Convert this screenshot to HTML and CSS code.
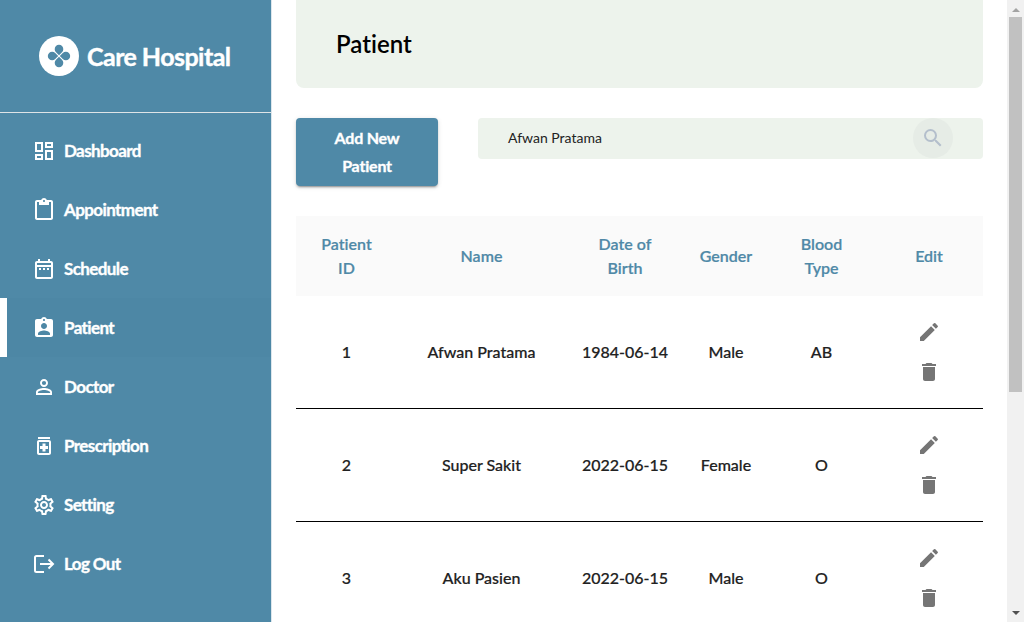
FILE: index.html
```html
<!DOCTYPE html>
<html lang="en">
<head>
<meta charset="utf-8">
<title>Care Hospital</title>
<link rel="stylesheet" href="styles.css">
</head>
<body>
<svg class="sprite" aria-hidden="true">
  <symbol id="pencil" viewBox="0 0 24 24"><path d="M3 17.25V21h3.75L17.81 9.94l-3.75-3.75L3 17.25zM20.71 7.04c.39-.39.39-1.02 0-1.41l-2.34-2.34a.9959.9959 0 0 0-1.41 0l-1.83 1.83 3.75 3.75 1.83-1.83z"/></symbol>
  <symbol id="trash" viewBox="0 0 24 24"><path d="M6 19c0 1.100.9 2 2 2h8c1.100 0 2-.9 2-2V7H6v12zM19 4h-3.500l-1-1h-5l-1 1H5v2h14V4z"/></symbol>
</svg>
<div class="app">
  <aside class="sidebar">
    <div class="brand">
      <svg class="logo" viewBox="0 0 40 40">
        <circle cx="20" cy="20" r="20" fill="#fff"/>
        <g fill="#4f89a7">
          <path d="M20 19.200 17 16.200A4.300 4.300 0 1 1 23 16.200z"/>
          <path d="M20 19.200 17 16.200A4.300 4.300 0 1 1 23 16.200z" transform="rotate(90 20 20)"/>
          <path d="M20 19.200 17 16.200A4.300 4.300 0 1 1 23 16.200z" transform="rotate(180 20 20)"/>
          <path d="M20 19.200 17 16.200A4.300 4.300 0 1 1 23 16.200z" transform="rotate(270 20 20)"/>
        </g>
      </svg>
      <span class="brand-name">Care Hospital</span>
    </div>
    <nav class="menu">
      <a class="menu-item"><svg class="icon" viewBox="0 0 24 24"><path d="M19 5v2h-4V5h4M9 5v6H5V5h4m10 8v6h-4v-6h4M9 17v2H5v-2h4M21 3h-8v6h8V3zM11 3H3v10h8V3zm10 8h-8v10h8V11zm-10 4H3v6h8v-6z"/></svg><span>Dashboard</span></a>
      <a class="menu-item"><svg class="icon" viewBox="0 0 24 24"><path d="M19 2h-4.180C14.400.84 13.300 0 12 0S9.600.84 9.180 2H5c-1.100 0-2 .9-2 2v16c0 1.100.9 2 2 2h14c1.100 0 2-.9 2-2V4c0-1.100-.9-2-2-2zm-7 0c.55 0 1 .45 1 1s-.45 1-1 1-1-.45-1-1 .45-1 1-1zm7 18H5V4h2v3h10V4h2v16z"/></svg><span>Appointment</span></a>
      <a class="menu-item"><svg class="icon" viewBox="0 0 24 24"><path d="M19 4h-1V2h-2v2H8V2H6v2H5c-1.110 0-1.990.9-1.990 2L3 20c0 1.100.89 2 2 2h14c1.100 0 2-.9 2-2V6c0-1.100-.9-2-2-2zm0 16H5V10h14v10zm0-12H5V6h14v2zM7 11h2v2H7zm4 0h2v2h-2zm4 0h2v2h-2z"/></svg><span>Schedule</span></a>
      <a class="menu-item active"><svg class="icon" viewBox="0 0 24 24"><path d="M19 3h-4.180C14.400 1.840 13.300 1 12 1s-2.400.84-2.820 2H5c-1.100 0-2 .9-2 2v14c0 1.100.9 2 2 2h14c1.100 0 2-.9 2-2V5c0-1.100-.9-2-2-2zm-7 0c.55 0 1 .45 1 1s-.45 1-1 1-1-.45-1-1 .45-1 1-1zm0 4c1.660 0 3 1.340 3 3s-1.340 3-3 3-3-1.340-3-3 1.340-3 3-3zm6 12H6v-1.400c0-2 4-3.100 6-3.100s6 1.100 6 3.100V19z"/></svg><span>Patient</span></a>
      <a class="menu-item"><svg class="icon" viewBox="0 0 24 24"><path d="M12 5.900a2.100 2.100 0 1 1 0 4.200 2.100 2.100 0 0 1 0-4.200m0 9c2.970 0 6.100 1.460 6.100 2.100v1.100H5.900V17c0-.64 3.130-2.100 6.100-2.100M12 4C9.790 4 8 5.790 8 8s1.790 4 4 4 4-1.790 4-4-1.790-4-4-4zm0 9c-2.670 0-8 1.340-8 4v3h16v-3c0-2.660-5.330-4-8-4z"/></svg><span>Doctor</span></a>
      <a class="menu-item"><svg class="icon" viewBox="0 0 24 24"><path d="M6 3h12v2H6zM17 6H7c-1.100 0-2 .9-2 2v11c0 1.100.9 2 2 2h10c1.100 0 2-.9 2-2V8c0-1.100-.9-2-2-2zm0 13H7V8h10v11zm-6.500-1.500h3V15H16v-3h-2.500V9.500h-3V12H8v3h2.500z"/></svg><span>Prescription</span></a>
      <a class="menu-item"><svg class="icon" viewBox="0 0 24 24"><path d="M19.430 12.980c.04-.32.070-.64.070-.98s-.03-.66-.07-.98l2.110-1.650c.19-.15.240-.42.120-.64l-2-3.460c-.09-.16-.26-.25-.44-.25-.06 0-.12.010-.17.030l-2.490 1c-.52-.4-1.080-.73-1.690-.98l-.38-2.650C14.460 2.180 14.250 2 14 2h-4c-.25 0-.46.180-.49.420l-.38 2.650c-.61.250-1.170.590-1.690.98l-2.490-1c-.06-.02-.12-.03-.18-.03-.17 0-.34.090-.43.250l-2 3.460c-.13.220-.07.490.12.640l2.110 1.650c-.04.320-.07.650-.07.980s.03.660.070.980l-2.110 1.650c-.19.150-.24.420-.12.640l2 3.460c.09.160.26.250.44.250.06 0 .12-.01.17-.03l2.490-1c.52.400 1.080.730 1.690.980l.38 2.650c.03.240.24.420.49.420h4c.25 0 .46-.18.490-.42l.38-2.650c.61-.25 1.170-.59 1.690-.98l2.490 1c.06.020.12.030.18.030.17 0 .34-.09.430-.25l2-3.460c.12-.22.070-.49-.12-.64l-2.110-1.650zm-1.980-1.710c.04.310.050.520.050.730s-.02.430-.05.730l-.14 1.130.89.700 1.080.84-.7 1.210-1.270-.51-1.040-.42-.9.680c-.43.320-.84.560-1.250.730l-1.060.43-.16 1.130-.2 1.350h-1.400l-.19-1.350-.16-1.130-1.060-.43c-.43-.18-.83-.41-1.230-.71l-.91-.7-1.060.43-1.270.51-.7-1.210 1.080-.84.890-.7-.14-1.130c-.03-.31-.05-.54-.05-.74s.02-.43.050-.73l.14-1.130-.89-.7-1.080-.84.700-1.210 1.270.51 1.040.42.900-.68c.43-.32.840-.56 1.250-.73l1.060-.43.160-1.130.2-1.350h1.390l.19 1.350.160 1.130 1.060.43c.43.180.83.410 1.230.71l.91.700 1.060-.43 1.270-.51.700 1.210-1.070.85-.89.700.14 1.130zM12 8c-2.210 0-4 1.790-4 4s1.790 4 4 4 4-1.790 4-4-1.790-4-4-4zm0 6c-1.100 0-2-.9-2-2s.9-2 2-2 2 .9 2 2-.9 2-2 2z"/></svg><span>Setting</span></a>
      <a class="menu-item"><svg class="icon line" viewBox="0 0 24 24"><path d="M12 4H4.500Q3 4 3 5.500v13Q3 20 4.500 20H12M8 12h13M16.500 7.500 21 12l-4.500 4.500"/></svg><span>Log Out</span></a>
    </nav>
  </aside>
  <main class="content">
    <header class="page-head"><h1>Patient</h1></header>
    <div class="toolbar">
      <button class="add">Add New Patient</button>
      <div class="search">
        <span class="query">Afwan Pratama</span>
        <span class="search-btn"><svg class="icon-search" viewBox="0 0 24 24"><path d="M15.500 14h-.79l-.28-.27A6.471 6.471 0 0 0 16 9.500 6.500 6.500 0 1 0 9.500 16c1.610 0 3.090-.59 4.230-1.570l.27.28v.79l5 4.990L20.490 19l-4.990-5zm-6 0C7.010 14 5 11.990 5 9.500S7.010 5 9.500 5 14 7.010 14 9.500 11.990 14 9.500 14z"/></svg></span>
      </div>
    </div>
    <table class="patients">
      <colgroup><col class="c-id"><col class="c-name"><col class="c-date"><col class="c-gender"><col class="c-blood"><col class="c-edit"></colgroup>
      <thead><tr><th>Patient<br>ID</th><th>Name</th><th>Date of<br>Birth</th><th>Gender</th><th>Blood<br>Type</th><th>Edit</th></tr></thead>
      <tbody>
        <tr><td>1</td><td>Afwan Pratama</td><td>1984-06-14</td><td>Male</td><td>AB</td><td><div class="actions"><svg><use href="#pencil"/></svg><svg><use href="#trash"/></svg></div></td></tr>
        <tr><td>2</td><td>Super Sakit</td><td>2022-06-15</td><td>Female</td><td>O</td><td><div class="actions"><svg><use href="#pencil"/></svg><svg><use href="#trash"/></svg></div></td></tr>
        <tr><td>3</td><td>Aku Pasien</td><td>2022-06-15</td><td>Male</td><td>O</td><td><div class="actions"><svg><use href="#pencil"/></svg><svg><use href="#trash"/></svg></div></td></tr>
      </tbody>
    </table>
  </main>
  <div class="scrollbar">
    <span class="arrow up"></span>
    <span class="thumb"></span>
    <span class="arrow down"></span>
  </div>
</div>
</body>
</html>
```
FILE: styles.css
```css
* { box-sizing: border-box; }
body { margin: 0; font-family: Lato, "Liberation Sans", sans-serif; font-variant-ligatures: none; color: #212121; background: #fff; overflow: hidden; }
.sprite { display: none; }
.app { display: flex; height: 622px; overflow: hidden; }

.sidebar { width: 272px; flex: none; background: #4f89a7; border-right: 1px solid #dce6ec; color: #fff; }
.brand { height: 113px; padding-left: 39px; border-bottom: 1px solid #dfe4e7; display: flex; align-items: center; gap: 8px; }
.logo { width: 40px; height: 40px; flex: none; }
.brand-name { font-size: 25px; font-weight: 700; letter-spacing: -0.55px; white-space: nowrap; -webkit-text-stroke: 0.4px #fff; }
.menu { padding-top: 8px; }
.menu-item { height: 59px; padding-left: 32px; display: flex; align-items: center; gap: 8px; font-size: 17px; line-height: 24px; font-weight: 700; letter-spacing: -0.6px; -webkit-text-stroke: 0.35px #fff; }
.menu-item span { padding-top: 1px; }
.menu-item.active { background: #4d87a5; border-left: 7px solid #fff; padding-left: 25px; }
.icon { width: 24px; height: 24px; fill: #fff; flex: none; }
.icon.line { fill: none; stroke: #fff; stroke-width: 2; }

.content { width: 735px; flex: none; padding: 0 24px; }
.page-head { height: 88px; padding-left: 40px; background: #edf3ec; border-radius: 0 0 8px 8px; display: flex; align-items: center; }
.page-head h1 { margin: 0; font-size: 24px; line-height: 32px; font-weight: 600; color: #000; }
.toolbar { margin-top: 30px; display: flex; align-items: flex-start; gap: 40px; }
.add { width: 142px; height: 68px; padding: 6px 16px; border: 0; border-radius: 4px; background: #4f89a7; color: #fff; font: 700 16px/28px Lato, sans-serif; font-variant-ligatures: none; letter-spacing: -0.2px; -webkit-text-stroke: 0.35px #fff; box-shadow: 0 3px 1px -2px rgba(0,0,0,.2), 0 2px 2px rgba(0,0,0,.14), 0 1px 5px rgba(0,0,0,.12); }
.search { flex: 1; height: 41px; padding: 0 30px; border-radius: 4px; background: #edf3ec; display: flex; justify-content: space-between; }
.query { font-size: 14px; font-weight: 400; line-height: 39px; color: #222; }
.search-btn { width: 40px; height: 40px; border-radius: 50%; background: #e6ece6; display: flex; align-items: center; justify-content: center; }
.icon-search { width: 24px; height: 24px; fill: #b4bfcc; }

.patients { width: 687px; margin-top: 30px; border-collapse: separate; border-spacing: 0; table-layout: fixed; font-size: 16px; line-height: 24px; text-align: center; -webkit-text-stroke: 0.2px; }
.c-id { width: 101px; } .c-name { width: 169px; } .c-date { width: 118px; }
.c-gender { width: 84px; } .c-blood { width: 107px; } .c-edit { width: 108px; }
.patients th { height: 80px; padding: 0; background: #fafafa; color: #4f89a7; font-weight: 600; }
.patients td { height: 113px; padding: 0; border-bottom: 1px solid #000; font-weight: 500; }
.actions { display: flex; flex-direction: column; align-items: center; gap: 16px; }
.actions svg { width: 24px; height: 24px; fill: #757575; }

.scrollbar { width: 17px; flex: none; padding: 8px 0 7px; background: #f1f1f1; display: flex; flex-direction: column; align-items: center; }
.thumb { width: 13px; height: 375px; margin: 5px 0 auto; background: #c1c1c1; }
.arrow { border: 4px solid transparent; }
.up { border-top: 0; border-bottom-color: #a3a3a3; }
.down { border-bottom: 0; border-top-color: #505050; }
```
